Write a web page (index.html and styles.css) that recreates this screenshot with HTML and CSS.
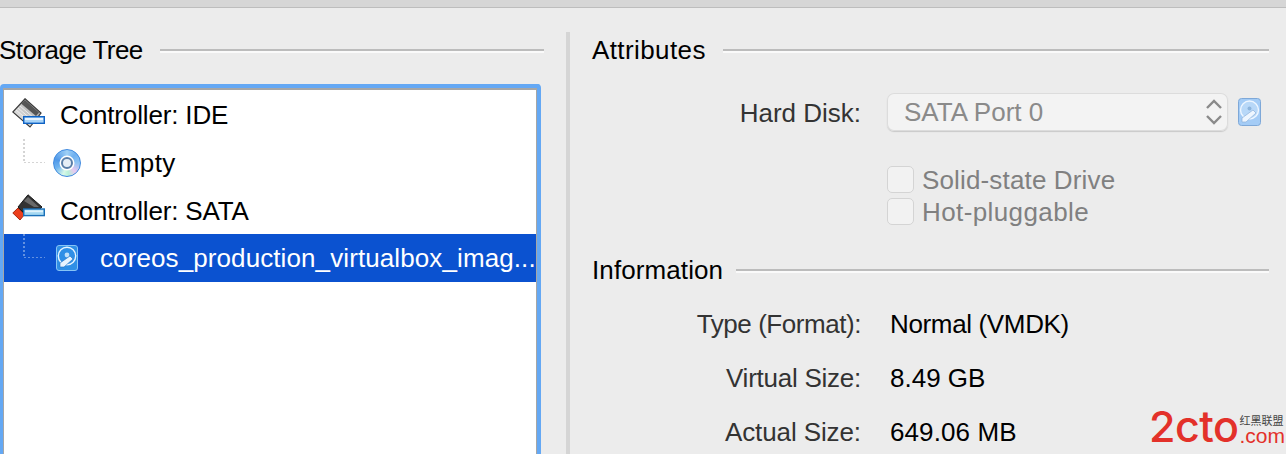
FILE: index.html
```html
<!DOCTYPE html>
<html lang="en">
<head>
<meta charset="utf-8">
<title>Storage</title>
<link rel="stylesheet" href="styles.css">
</head>
<body>
<div class="topbar"></div>
<main class="layout">
  <section class="left">
    <div class="heading left-heading"><span class="storage-title">Storage Tree</span><i class="rule"></i></div>
    <div class="tree">
      <div class="row">
        <svg class="ctl" width="34" height="34" viewBox="0 0 34 34"><defs><linearGradient id="body" x1="0" y1="1" x2="1" y2="0"><stop offset="0" stop-color="#fafafa"/><stop offset=".6" stop-color="#bcbcbc"/><stop offset="1" stop-color="#888"/></linearGradient></defs><path d="M13 .8 L29 15 L18 29 L.8 14Z" fill="url(#body)" stroke="#3a3a3a" stroke-width="1.2"/><path d="M13 2 L27 14.5 L24 18 L9 5.5Z" fill="#555"/><path d="M8 8 L22 20 M6 10 L20 22 M4 12 L18 24" stroke="#fff" stroke-width=".8" opacity=".8"/><rect x="11.7" y="18.7" width="20.6" height="6.6" fill="#a8d4f8" stroke="#0f62c4" stroke-width="1.4"/><rect x="13" y="20" width="18" height="2" fill="#e8f4ff"/></svg>
        <span class="t-ide">Controller: IDE</span>
      </div>
      <div class="row child">
        <svg class="dots" width="24" height="24" viewBox="0 0 24 24"><path d="M1 0 V24 H22" fill="none" stroke="#aaa" stroke-dasharray="2 2"/></svg>
        <i class="disc"></i>
        <span class="t-empty">Empty</span>
      </div>
      <div class="row">
        <svg class="ctl" width="34" height="34" viewBox="0 0 34 34"><path d="M16 .8 L30 13 L25 18 L11 18 L6 13 Z" fill="#333" stroke="#1a1a1a"/><path d="M16 3 L27 13 L22 13 L12 7Z" fill="#6a6a6a"/><path d="M6 14 L12.5 20.5 L8 26 L.8 19Z" fill="#ec3f1c" stroke="#a52a10"/><rect x="11.7" y="15" width="20.6" height="6.6" fill="#a4d8f2" stroke="#1a70b8" stroke-width="1.4"/><rect x="13" y="16.4" width="18" height="1.8" fill="#dff2fb"/></svg>
        <span class="t-sata">Controller: SATA</span>
      </div>
      <div class="row child selected">
        <svg class="dots" width="24" height="24" viewBox="0 0 24 24"><path d="M1 0 V24 H22" fill="none" stroke="#bcd0f0" stroke-dasharray="2 2"/></svg>
        <svg class="hd" width="22" height="26" viewBox="0 0 22 26"><rect x=".5" y=".5" width="21" height="25" rx="2.5" fill="#2f8fe6" stroke="#86c4f6"/><circle cx="11" cy="11" r="8.7" fill="#2f8fe6" stroke="#e8f4ff" stroke-width="1.4"/><circle cx="11" cy="10" r="2.4" fill="#bfe0fa"/><path d="M4 22 L4 18 L14 11 L17 14 L8 22Z" fill="#e8f4ff" stroke="#1f70c0" stroke-width=".6"/></svg>
        <span class="t-long">coreos_production_virtualbox_imag...</span>
      </div>
    </div>
  </section>
  <div class="splitter"></div>
  <section class="right">
    <div class="heading"><span class="attr-title">Attributes</span><i class="rule"></i></div>
    <div class="field disk-field">
      <label class="key">Hard Disk:</label>
      <div class="select"><span>SATA Port 0</span>
        <svg width="20" height="30" viewBox="0 0 20 30"><path d="M3 11 L10 4 L17 11 M3 19 L10 26 L17 19" fill="none" stroke="#8a8a8a" stroke-width="2.4"/></svg>
      </div>
      <svg class="pick" width="23" height="28" viewBox="0 0 23 28"><rect x=".5" y=".5" width="22" height="27" rx="3" fill="#a4ccf6" stroke="#7ea8d8"/><circle cx="11.5" cy="12" r="9" fill="#b8d8f8" stroke="#eef6ff" stroke-width="1.4"/><circle cx="11.5" cy="10.5" r="2" fill="#8cb4dc"/><path d="M4 24 L4 20 L15 12 L18 15 L8 24Z" fill="#eef6ff" stroke="#8cb0d8" stroke-width=".7"/></svg>
    </div>
    <div class="checks">
      <div class="check"><i class="box"></i><span class="t-solid">Solid-state Drive</span></div>
      <div class="check"><i class="box"></i><span class="t-hot">Hot-pluggable</span></div>
    </div>
    <div class="heading info-heading"><span class="info-title">Information</span><i class="rule"></i></div>
    <div class="info">
      <div class="field"><label class="key t-type">Type (Format):</label><span class="val t-normal">Normal (VMDK)</span></div>
      <div class="field"><label class="key t-virtual">Virtual Size:</label><span class="val">8.49 GB</span></div>
      <div class="field"><label class="key t-actual">Actual Size:</label><span class="val t-mb">649.06 MB</span></div>
    </div>
  </section>
</main>
<div class="logo"><span class="logo-main">2cto</span><span class="logo-side"><span class="logo-cn">红黑联盟</span><span class="logo-com">.com</span></span></div>
</body>
</html>
```
FILE: styles.css
```css
html, body { margin: 0; height: 454px; overflow: hidden; }
body {
  position: relative;
  background: #ececec;
  font-family: "Liberation Sans", Arial, sans-serif;
  font-size: 26px;
  color: #000;
}
.topbar { height: 7px; background: #d6d6d6; border-bottom: 1px solid #bdbdbd; }
.layout { display: flex; height: 446px; }
.left { width: 566px; flex: none; overflow: hidden; }
.splitter { width: 4px; flex: none; background: #d5d5d5; margin-top: 24px; }
.right { width: 677px; margin-left: 22px; flex: none; }
.heading { display: flex; align-items: center; height: 30px; margin-top: 27px; white-space: nowrap; }
.left-heading { margin-left: -1px; margin-right: 22px; }
.rule { flex: 1; display: block; height: 2px; background: #bcbcbc; border-bottom: 2px solid #fafafa; margin-top: 2px; }
.storage-title { margin-right: 17px; letter-spacing: -.55px; }
.attr-title { margin-right: 17px; letter-spacing: .4px; }
.info-title { margin-right: 13px; letter-spacing: .1px; }
.tree {
  box-sizing: border-box;
  width: 541px;
  height: 400px;
  margin-top: 19px;
  background: #fff;
  border: 4px solid #64a8f4;
  border-left-width: 3px;
  border-bottom: 0;
  border-radius: 4px 4px 0 0;
  padding-top: 3px;
  position: relative;
}
.tree::before {
  content: "";
  position: absolute;
  inset: 0;
  border: solid #a6a6a6;
  border-width: 2px 1px 0;
  pointer-events: none;
}
.row { display: flex; align-items: center; height: 48px; padding-left: 9px; white-space: nowrap; }
.row .ctl { margin-right: 14px; flex: none; }
.row.child { padding-left: 20px; }
.row .dots { flex: none; margin-right: 6px; align-self: flex-start; }
.disc {
  flex: none;
  box-sizing: border-box;
  position: relative;
  width: 28px;
  height: 28px;
  margin-right: 19px;
  border-radius: 50%;
  border: 1.5px solid #3f8ae0;
  background: conic-gradient(#9fd0f6, #6fb0f0 12%, #8fc4f4 25%, #e8c8f0 38%, #b8f0d8 48%, #d8f8e8 55%, #6fb4f0 68%, #4f98e8 80%, #9fd0f6);
}
.disc::after {
  content: "";
  position: absolute;
  left: 7px;
  top: 7px;
  width: 8px;
  height: 8px;
  border-radius: 50%;
  background: #e6eef6;
  border: 2px solid #5a7ea8;
  box-shadow: 0 0 0 1.5px #fff;
}
.row .hd { flex: none; margin-right: 22px; margin-left: 3px; }
.selected { background: #0b52d0; color: #fff; margin-top: -1px; }
.t-ide, .t-sata { letter-spacing: -.15px; }
.t-empty { letter-spacing: .4px; }
.t-long { letter-spacing: .1px; }
.t-solid { letter-spacing: .15px; padding-top: 2px; }
.t-hot { letter-spacing: .4px; padding-top: 2px; }
.t-type { letter-spacing: -.45px; }
.t-normal { letter-spacing: -.35px; }
.t-virtual { letter-spacing: -.25px; }
.t-actual { letter-spacing: -.1px; }
.t-mb { letter-spacing: .1px; }

.field { display: flex; align-items: center; white-space: nowrap; }
.key { width: 269px; text-align: right; color: #333; flex: none; }
.val { margin-left: 29px; }
.disk-field { height: 38px; margin-top: 28px; }
.disk-field .key { margin-right: 26px; padding-top: 2px; }
.select {
  box-sizing: border-box;
  width: 341px;
  height: 38px;
  display: flex;
  align-items: center;
  justify-content: space-between;
  padding: 0 4px 0 17px;
  border-radius: 7px;
  background: #f3f3f3;
  box-shadow: 0 1px 1px #c9c9c9, 0 0 0 1px #dcdcdc inset;
  color: #8a8a8a;
}
.pick { margin-left: 10px; flex: none; }
.checks { margin-top: 35px; margin-left: 295px; display: flex; flex-direction: column; gap: 5px; }
.check { display: flex; align-items: center; height: 27px; color: #808080; }
.box {
  box-sizing: border-box;
  width: 27px;
  height: 27px;
  margin-right: 8px;
  border: 1px solid #d4d4d4;
  border-radius: 5px;
  background: #f2f2f2;
}
.info-heading { margin-top: 30px; }
.info { margin-top: 12px; display: flex; flex-direction: column; }
.info .field { height: 54px; }

.logo {
  position: absolute;
  left: 1149px;
  top: 408px;
  display: flex;
  align-items: flex-end;
  height: 36px;
  white-space: nowrap;
}
.logo-main {
  font-family: Inter, "Liberation Sans", sans-serif;
  font-weight: 500;
  font-size: 43px;
  line-height: 36px;
  letter-spacing: -.5px;
  color: #e3312a;
}
.logo-side { display: flex; flex-direction: column; margin-left: 1px; }
.logo-cn { font-family: "Noto Sans CJK SC", sans-serif; font-size: 11px; line-height: 13px; color: #444; }
.logo-com { font-size: 21px; line-height: 17px; color: #e3312a; }
```
